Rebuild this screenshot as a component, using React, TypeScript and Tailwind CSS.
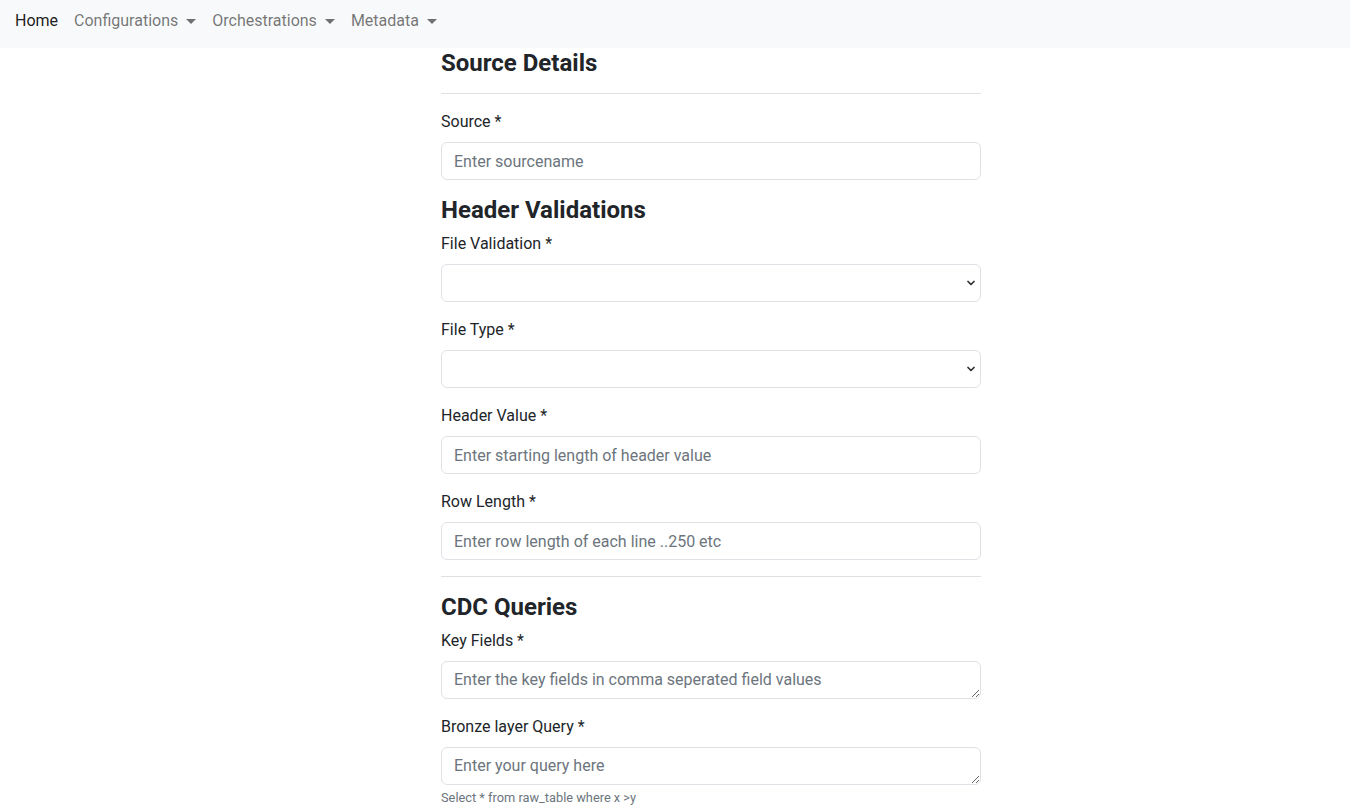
import { ChevronDown } from "lucide-react";

const navItems = [
  { label: "Home", active: true, dropdown: false },
  { label: "Configurations", active: false, dropdown: true },
  { label: "Orchestrations", active: false, dropdown: true },
  { label: "Metadata", active: false, dropdown: true },
];

const inputCls =
  "block w-full h-[38px] rounded-md border border-[#dee2e6] bg-white px-3 text-base text-[#212529] placeholder:text-[#6c757d] outline-none";

const headingCls = "text-2xl leading-[28px] font-bold mb-2";

const Label = ({ children }: { children: React.ReactNode }) => (
  <label className="block mb-2 leading-6 text-base text-[#212529]">{children}</label>
);

const Select = () => (
  <div className="relative">
    <select className={`${inputCls} appearance-none pr-8`}>
      <option></option>
    </select>
    <ChevronDown
      className="pointer-events-none absolute right-[4px] top-[13px] h-3 w-3 text-[#333]"
      strokeWidth={3.5}
    />
  </div>
);

const App = () => {
  return (
    <div className="min-h-screen bg-white text-[#212529]" style={{ fontFamily: "Roboto, 'Liberation Sans', sans-serif" }}>
      {/* Navbar */}
      <nav className="h-12 bg-[#f8f9fa] flex items-center pl-[7px]">
        {navItems.map((item) => (
          <a
            key={item.label}
            href="#"
            className={`flex items-center px-2 pb-[6px] text-base leading-6 ${
              item.active ? "text-black/90" : "text-black/55"
            }`}
          >
            {item.label}
            {item.dropdown && (
              <span className="ml-2 inline-block border-t-[5px] border-x-[5px] border-x-transparent border-t-black/55" />
            )}
          </a>
        ))}
      </nav>

      {/* Form */}
      <div className="ml-[441px] w-[540px]">
        <h4 className={`${headingCls} pt-px`}>Source Details</h4>
        <hr className="mt-4 mb-4 border-t border-[#e0e0e0]" />
        <div className="mb-4">
          <Label>Source *</Label>
          <input className={inputCls} placeholder="Enter sourcename" />
        </div>

        <h4 className={headingCls}>Header Validations</h4>
        <div className="mb-4">
          <Label>File Validation *</Label>
          <Select />
        </div>
        <div className="mb-4">
          <Label>File Type *</Label>
          <Select />
        </div>
        <div className="mb-4">
          <Label>Header Value *</Label>
          <input className={inputCls} placeholder="Enter starting length of header value" />
        </div>
        <div>
          <Label>Row Length *</Label>
          <input className={inputCls} placeholder="Enter row length of each line ..250 etc" />
        </div>
        <hr className="mt-4 mb-4 border-t border-[#e0e0e0]" />

        <h4 className={headingCls}>CDC Queries</h4>
        <div className="mb-4">
          <Label>Key Fields *</Label>
          <textarea
            rows={1}
            className={`${inputCls} py-[6px] leading-6`}
            placeholder="Enter the key fields in comma seperated field values"
          />
        </div>
        <div>
          <Label>Bronze layer Query *</Label>
          <textarea rows={1} className={`${inputCls} py-[6px] leading-6`} placeholder="Enter your query here" />
          <div className="mt-1 text-[12.8px] leading-[17px] text-[#6c757d]">Select * from raw_table where x &gt;y</div>
        </div>
      </div>
    </div>
  );
};

export default App;
